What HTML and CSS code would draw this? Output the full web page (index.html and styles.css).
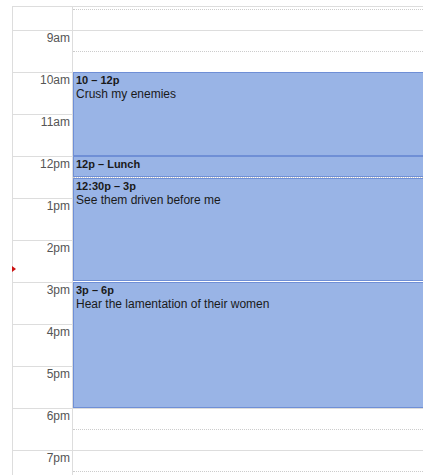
FILE: index.html
```html
<!DOCTYPE html>
<html lang="en">
<head>
    <meta charset="UTF-8">
    <title>Day view</title>
    <link rel="stylesheet" href="styles.css">
</head>
<body>
    <div class="view">
        <div class="calendar">
            <div class="hours">
                <div class="hour"><div class="label"></div><div class="slot"></div></div>
                <div class="hour"><div class="label">9am</div><div class="slot"></div></div>
                <div class="hour"><div class="label">10am</div><div class="slot"></div></div>
                <div class="hour"><div class="label">11am</div><div class="slot"></div></div>
                <div class="hour"><div class="label">12pm</div><div class="slot"></div></div>
                <div class="hour"><div class="label">1pm</div><div class="slot"></div></div>
                <div class="hour"><div class="label">2pm</div><div class="slot"></div></div>
                <div class="hour"><div class="label">3pm</div><div class="slot"></div></div>
                <div class="hour"><div class="label">4pm</div><div class="slot"></div></div>
                <div class="hour"><div class="label">5pm</div><div class="slot"></div></div>
                <div class="hour"><div class="label">6pm</div><div class="slot"></div></div>
                <div class="hour"><div class="label">7pm</div><div class="slot"></div></div>
            </div>

            <!-- events: top/height from start time and duration, 42px per hour from 8am -->
            <div class="events">
                <div class="event" style="top: 84px; height: 84px;">
                    <div class="event-time">10 – 12p</div>
                    <div class="event-title">Crush my enemies</div>
                </div>
                <div class="event" style="top: 168px; height: 21px;">
                    <div class="event-time">12p – Lunch</div>
                </div>
                <div class="event" style="top: 190px; height: 103px;">
                    <div class="event-time">12:30p – 3p</div>
                    <div class="event-title">See them driven before me</div>
                </div>
                <div class="event" style="top: 294px; height: 126px;">
                    <div class="event-time">3p – 6p</div>
                    <div class="event-title">Hear the lamentation of their women</div>
                </div>
            </div>
        </div>
        <div class="now-marker"></div>
    </div>
</body>
</html>
```

FILE: styles.css
```css
body {
    margin: 0;
    background-color: #fff;
    font-family: "Liberation Sans", Arial, sans-serif;
}

.view {
    position: relative;
    padding: 6px 0 0 12px;
}

.calendar {
    position: relative;
    height: 469px;
    overflow: hidden;
    border-top: 1px solid #ddd;
    border-left: 1px solid #ddd;
}

.hours {
    margin-top: -19px;
}

.hour {
    display: flex;
    height: 42px;
    box-sizing: border-box;
    border-top: 1px solid #ddd;
}

.label {
    width: 60px;
    box-sizing: border-box;
    border-right: 1px solid #ddd;
    padding: 1px 2px 0 0;
    text-align: right;
    font-size: 12px;
    line-height: 13px;
    color: #555;
}

.slot {
    flex: 1;
    position: relative;
}

.slot::after {
    content: "";
    position: absolute;
    left: 0;
    right: 0;
    top: 20px;
    border-top: 1px dotted #ccc;
}

.events {
    position: absolute;
    top: -19px;
    left: 60px;
    right: -10px;
}

.event {
    position: absolute;
    left: 0;
    right: 0;
    box-sizing: border-box;
    padding: 1px 3px 1px 2px;
    background-color: #99b4e6;
    border: 1px solid #6f8fd6;
    color: #1a1a1a;
    overflow: hidden;
}

.event-time {
    font-size: 11px;
    font-weight: bold;
    line-height: 13px;
}

.event-title {
    font-size: 12px;
    line-height: 14px;
}

.now-marker {
    position: absolute;
    left: 12px;
    top: 266px;
    width: 0;
    height: 0;
    border-left: 4px solid #cc1111;
    border-top: 3.5px solid transparent;
    border-bottom: 3.5px solid transparent;
}
```
